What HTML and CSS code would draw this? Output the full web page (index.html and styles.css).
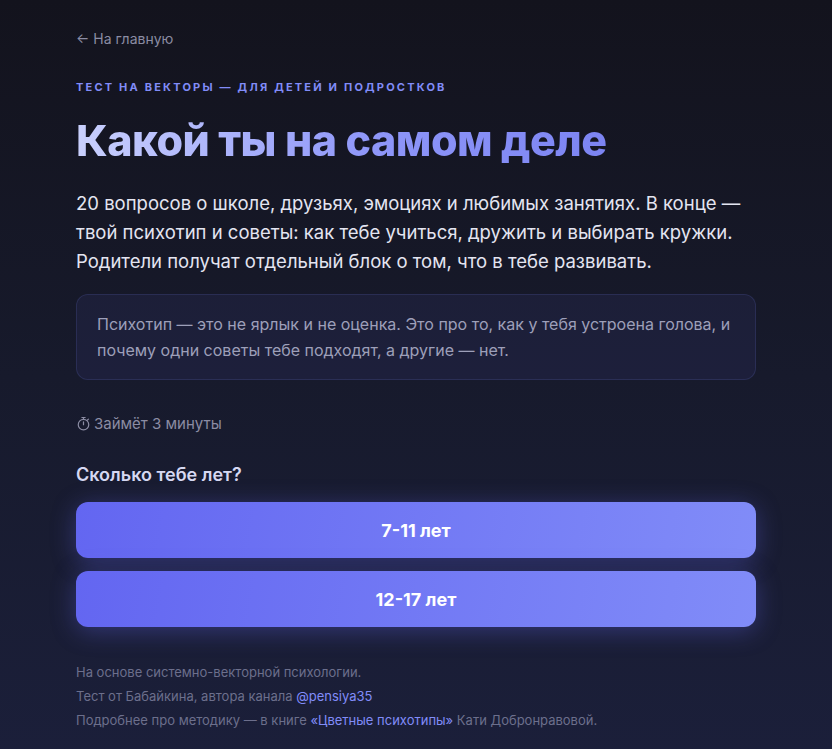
FILE: index.html
```html
<!DOCTYPE html>
<html lang="ru">
<head>
<meta charset="utf-8">
<title>Какой ты на самом деле</title>
<link rel="stylesheet" href="styles.css">
</head>
<body>
<main class="page">
  <a class="back" href="#">← На главную</a>
  <div class="eyebrow">Тест на векторы — для детей и подростков</div>
  <h1 class="title">Какой ты на самом деле</h1>
  <p class="lead">20 вопросов о школе, друзьях, эмоциях и любимых занятиях. В конце — твой психотип и советы: как тебе учиться, дружить и выбирать кружки. Родители получат отдельный блок о том, что в тебе развивать.</p>
  <div class="note">Психотип — это не ярлык и не оценка. Это про то, как у тебя устроена голова, и почему одни советы тебе подходят, а другие — нет.</div>
  <div class="time">
    <svg class="time-icon" viewBox="0 0 16 16" width="15" height="15" aria-hidden="true">
      <circle cx="8" cy="9.2" r="5.6" fill="none" stroke="currentColor" stroke-width="1.3"/>
      <path d="M6.3 1.6h3.4M8 1.6v2M8 9.2V6.2M12.3 4.3l1-1" fill="none" stroke="currentColor" stroke-width="1.3" stroke-linecap="round"/>
    </svg>
    <span>Займёт 3 минуты</span>
  </div>
  <div class="question">Сколько тебе лет?</div>
  <div class="options">
    <button class="option">7-11 лет</button>
    <button class="option">12-17 лет</button>
  </div>
  <footer class="foot">
    <p>На основе системно-векторной психологии.</p>
    <p>Тест от Бабайкина, автора канала <a href="#">@pensiya35</a></p>
    <p>Подробнее про методику — в книге <a href="#">«Цветные психотипы»</a> Кати Добронравовой.</p>
  </footer>
</main>
</body>
</html>
```

FILE: styles.css
```css
* { box-sizing: border-box; }
html, body { margin: 0; padding: 0; }
body {
  min-height: 749px;
  background: linear-gradient(180deg, #13131d 0%, #171a2c 50%, #1b1f3a 100%);
  font-family: Inter, "Noto Sans", sans-serif;
  color: #e6e7f2;
}
.page {
  width: 680px;
  margin: 0 auto;
  padding: 30px 0 20px;
  display: flex;
  flex-direction: column;
}
.back {
  color: #8b8ca3;
  text-decoration: none;
  font-size: 14px;
  line-height: 18px;
  align-self: flex-start;
}
.eyebrow {
  margin-top: 32px;
  font-size: 11px;
  line-height: 14px;
  font-weight: 700;
  letter-spacing: 2.2px;
  text-transform: uppercase;
  color: #818cf8;
}
.title {
  margin: 20px 0 0;
  font-size: 43px;
  line-height: 52px;
  font-weight: 800;
  letter-spacing: -0.5px;
  background: linear-gradient(90deg, #c9d0fd 0%, #8f97f9 55%, #7c84f2 100%);
  -webkit-background-clip: text;
  background-clip: text;
  color: transparent;
  align-self: flex-start;
}
.lead {
  margin: 23px 0 0;
  font-size: 18.5px;
  line-height: 29px;
  color: #e4e5f1;
}
.note {
  margin-top: 18px;
  padding: 16px 20px;
  border-radius: 12px;
  border: 1px solid rgba(129, 140, 248, 0.14);
  background: rgba(99, 102, 241, 0.08);
  font-size: 16px;
  line-height: 26px;
  color: #9d9fb9;
}
.time {
  margin-top: 34px;
  display: flex;
  align-items: center;
  gap: 3px;
  font-size: 15px;
  line-height: 20px;
  color: #8b8ca3;
}
.time-icon {
  display: block;
  color: #8b8ca3;
  margin-top: -1px;
}
.question {
  margin-top: 29px;
  font-size: 18px;
  line-height: 24px;
  font-weight: 600;
  color: #d6d8f2;
}
.options {
  margin-top: 15px;
  display: flex;
  flex-direction: column;
  gap: 13px;
}
.option {
  height: 56px;
  border: 0;
  border-radius: 12px;
  background: linear-gradient(100deg, #6366f1 0%, #818cf8 100%);
  box-shadow: 0 4px 24px rgba(99, 102, 241, 0.35);
  color: #ffffff;
  font-family: inherit;
  font-size: 18px;
  font-weight: 700;
  cursor: pointer;
}
.foot {
  margin-top: 33px;
  font-size: 13px;
  line-height: 24px;
  color: #6c6f8c;
}
.foot p { margin: 0; }
.foot a { color: #818cf8; text-decoration: none; }
```
